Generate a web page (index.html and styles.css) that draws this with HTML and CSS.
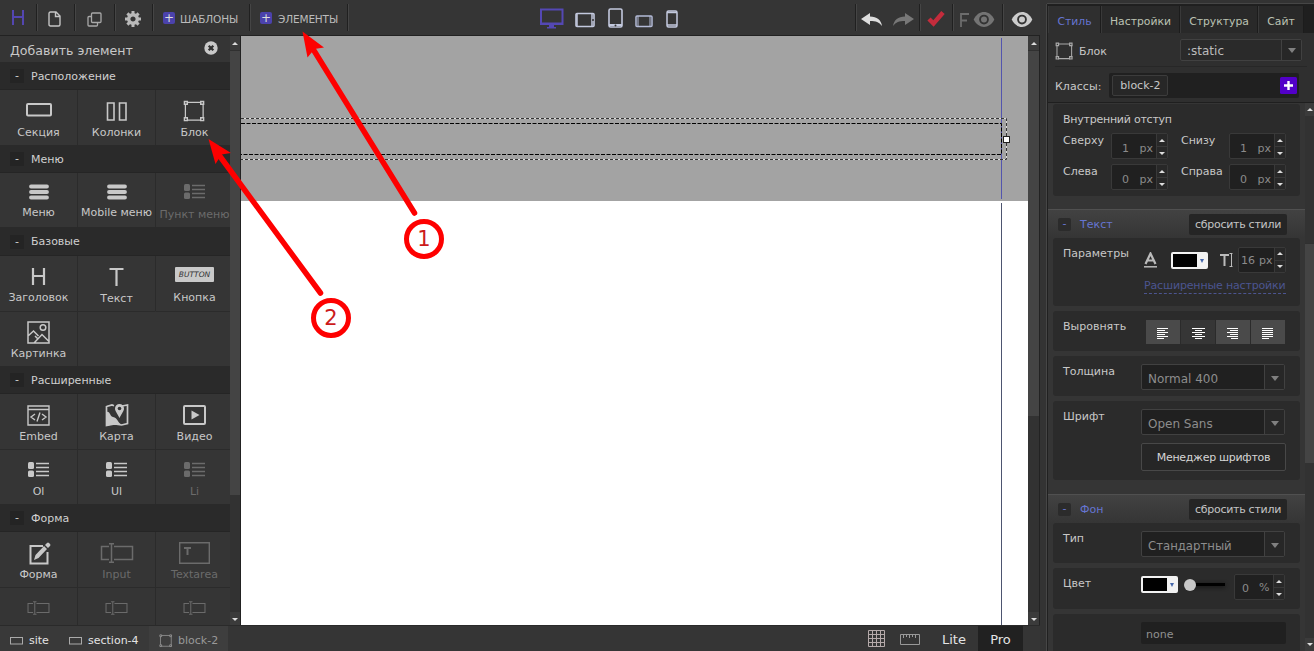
FILE: index.html
```html
<!DOCTYPE html>
<html lang="ru">
<head>
<meta charset="utf-8">
<title>Редактор</title>
<link rel="stylesheet" href="styles.css">
</head>
<body>
<svg class="defs" width="0" height="0">
  <symbol id="block" viewBox="0 0 24 24"><path d="M4 2.500h15M4 21h15M2.500 4v15M21 4v15" fill="none" stroke="currentColor" stroke-width="1.300"/><path d="M1.500 1.500h3v3h-3zM18.500 1.500h3v3h-3zM1.500 18.500h3v3h-3zM18.500 18.500h3v3h-3z" fill="#333" stroke="currentColor" stroke-width="1.500"/></symbol>
  <symbol id="burger" viewBox="0 0 20 18"><path d="M2 3.500h16M2 9h16M2 14.500h16" stroke="currentColor" stroke-width="3.800" stroke-linecap="round"/></symbol>
  <symbol id="list" viewBox="0 0 22 16"><rect width="6" height="7" rx="1.500" fill="currentColor"/><rect y="8.500" width="6" height="6.500" rx="1.500" fill="currentColor"/><path d="M8 1.500h13M8 5.500h13M8 9.500h13M8 13.500h13" stroke="currentColor" stroke-width="1.600"/></symbol>
  <symbol id="input" viewBox="0 0 34 20"><path d="M9 3.500H1.500v13H9M14 3.500h18.500v13H14M11.500 1v18M9 .7h5M9 19.300h5" fill="none" stroke="currentColor" stroke-width="1.500"/></symbol>
  <symbol id="eye" viewBox="0 0 22 16"><path d="M0 8C5-2.500 17-2.500 22 8 17 18.500 5 18.500 0 8z" fill="currentColor"/><circle cx="11" cy="8" r="4.200" fill="none" stroke="#333" stroke-width="2"/></symbol>
  <symbol id="undo" viewBox="0 0 22 14"><path d="M0 6 9 0v3.500c7 0 11 3.500 12 9.500-3-4-6-5-12-5V12z" fill="currentColor"/></symbol>
</svg>

<div class="app">
  <header class="topbar">
    <div class="tb logo"><svg width="14" height="17" viewBox="0 0 14 17"><path d="M2 1v15M12 1v15M2 8h10" stroke="#5346b0" stroke-width="2"/></svg></div>
    <div class="tb t38"><svg width="13" height="16" viewBox="0 0 13 16"><path d="M1 2.500Q1 1 2.500 1H8l4 4v8.500q0 1.500-1.500 1.500h-8Q1 15 1 13.500zM7.500 1v4.500H12" fill="none" stroke="#c4c4c4" stroke-width="1.400"/></svg></div>
    <div class="tb t40"><svg width="15" height="15" viewBox="0 0 15 15" fill="none" stroke="#a8a8a8" stroke-width="1.300"><rect x="4.500" y="1" width="9.500" height="9.500" rx="1"/><path d="M4.500 4.500H2q-1 0-1 1V13q0 1 1 1h7.500q1 0 1-1v-2.500"/></svg></div>
    <div class="tb t38"><svg width="16" height="16" viewBox="-8 -8 16 16"><circle r="4.300" fill="none" stroke="#b9b9b9" stroke-width="3.400"/><path d="M0-8v3M0 8V5M-8 0h3M8 0H5M-5.600-5.600l2 2M5.600 5.600l-2-2M-5.600 5.600l2-2M5.600-5.600l-2 2" stroke="#b9b9b9" stroke-width="3"/></svg></div>
    <div class="tb wide"><i class="plus">+</i>ШАБЛОНЫ</div>
    <div class="tb wide last"><i class="plus">+</i>ЭЛЕМЕНТЫ</div>
    <div class="devices">
      <svg width="26" height="22" viewBox="0 0 26 22"><path d="M2 1.500h21.500v14.500H2z" fill="none" stroke="#5448b4" stroke-width="2"/><path d="M1.500 14.500h22v2.500h-22zM10 17h5v2h2v1.500H8V19h2z" fill="#5448b4"/></svg>
      <svg class="d2" width="20" height="16" viewBox="0 0 20 16"><rect x="1" y="1.500" width="18" height="13" rx="1" fill="none" stroke="#c3c9de" stroke-width="1.600"/><path d="M2 1v13M17 1v13" stroke="#c3c9de" stroke-width="1.500"/><circle cx="18" cy="8" r="1" fill="#333"/></svg>
      <svg class="d3" width="15" height="20" viewBox="0 0 15 20"><rect x="1" y="1" width="13" height="18" rx="1.500" fill="none" stroke="#c3c9de" stroke-width="1.600"/><path d="M1 17h13" stroke="#c3c9de" stroke-width="2"/><circle cx="7.500" cy="17.500" r="1" fill="#333"/></svg>
      <svg class="d4" width="18" height="13" viewBox="0 0 18 13"><rect x="1" y="1" width="16" height="10.500" rx="1" fill="none" stroke="#b3bad6" stroke-width="1.500"/><path d="M3 1v10M15 1v10" stroke="#b3bad6"/></svg>
      <svg class="d5" width="12" height="18" viewBox="0 0 12 18"><rect x="1" y="1" width="10" height="16" rx="1.500" fill="none" stroke="#c3c9de" stroke-width="1.500"/><path d="M1 2.500h10M1 15h10" stroke="#c3c9de" stroke-width="1.500"/></svg>
    </div>
    <div class="tools">
      <div class="tool undo"><svg width="22" height="14" color="#ddd"><use href="#undo"/></svg><svg class="flip" width="22" height="14" color="#777"><use href="#undo"/></svg></div>
      <div class="tool check"><svg width="18" height="17" viewBox="0 0 18 17"><path d="m2 9 4.500 4.500L16 2.500" fill="none" stroke="#c42c3c" stroke-width="4.500"/></svg></div>
      <div class="tool fview"><svg width="9" height="14" viewBox="0 0 9 14"><path d="M1 14V1h8M1 7.500h6" fill="none" stroke="#6c6c6c" stroke-width="1.800"/></svg><svg width="22" height="15" color="#747474"><use href="#eye"/></svg></div>
      <div class="tool view"><svg width="22" height="15" color="#ccc"><use href="#eye"/></svg></div>
    </div>
  </header>

  <main class="work">
    <aside class="side">
      <div class="side-title"><span>Добавить элемент</span><svg width="14" height="14" viewBox="0 0 14 14"><circle cx="7" cy="7" r="6.700" fill="#c9c9c9"/><path d="m4.700 4.700 4.600 4.600m0-4.600L4.700 9.300" stroke="#303030" stroke-width="2.300"/></svg></div>
      <h3 class="group"><i>-</i><span>Расположение</span></h3>
      <div class="cells">
        <div class="cell"><b class="raise"><svg width="26" height="14"><rect x="1" y="1" width="24" height="11.500" rx="1" fill="none" stroke="currentColor" stroke-width="2"/></svg></b>Секция</div>
        <div class="cell"><b><svg width="22" height="19"><path d="M1.500 1h6.500v17H1.500zM13.500 1H20v17h-6.500z" fill="none" stroke="currentColor" stroke-width="1.600"/></svg></b>Колонки</div>
        <div class="cell"><b><svg width="23" height="23"><use href="#block"/></svg></b>Блок</div>
      </div>
      <h3 class="group"><i>-</i><span>Меню</span></h3>
      <div class="cells menu">
        <div class="cell"><b><svg width="20" height="18"><use href="#burger"/></svg></b>Меню</div>
        <div class="cell"><b><svg width="20" height="18"><use href="#burger"/></svg></b>Mobile меню</div>
        <div class="cell off low"><b><svg width="22" height="16"><use href="#list"/></svg></b>Пункт меню</div>
      </div>
      <h3 class="group tall"><i>-</i><span>Базовые</span></h3>
      <div class="cells">
        <div class="cell up"><b><svg width="15" height="17"><path d="M2 0v17M13 0v17M2 8h11" stroke="currentColor" stroke-width="2.200"/></svg></b>Заголовок</div>
        <div class="cell"><b><svg width="15" height="18"><path d="M.5 1h14M7.500 1v17" stroke="currentColor" stroke-width="2.200"/></svg></b>Текст</div>
        <div class="cell up"><b class="btn-icon"><em>BUTTON</em></b>Кнопка</div>
        <div class="cell top"><b><svg width="23" height="23" viewBox="0 0 23 23" fill="none" stroke="currentColor" stroke-width="1.500"><path d="M1 1h21v21H1zM1 15l5.500-5 5 5M7 22l8-8.500 7 7M11 18l-3-3"/><circle cx="16" cy="6.500" r="2.800"/></svg></b>Картинка</div>
        <div class="cell blank top"></div><div class="cell top"></div>
      </div>
      <h3 class="group"><i>-</i><span>Расширенные</span></h3>
      <div class="cells">
        <div class="cell"><b><svg width="23" height="21" viewBox="0 0 23 21" fill="none" stroke="currentColor" stroke-width="1.400"><path d="M1 1h21v19H1zM1 4.500h21M8 9l-4 3 4 3M15 9l4 3-4 3M13 7.500l-3 9"/></svg></b>Embed</div>
        <div class="cell"><b><svg width="24" height="23" viewBox="0 0 24 23"><path d="M1.500 2.500 7 1l2 .800M17 2l5.500-1v18.500L16.500 21l-7-1-8 1.500V2" fill="none" stroke="currentColor" stroke-width="1.700"/><path d="M1 8c5-1 3 4 7 5 5 1 4 5 9 8l-8-1-8 2z" fill="currentColor"/><path d="M14.500 14C12 9 10 7 10 4.500a4.500 4.500 0 0 1 9 0C19 7 17 9 14.500 14z" fill="currentColor"/><circle cx="14.500" cy="4.500" r="1.800" fill="#333"/></svg></b>Карта</div>
        <div class="cell"><b><svg width="23" height="20"><rect x="1" y="1" width="21" height="18" rx="1" fill="none" stroke="currentColor" stroke-width="2"/><path d="m8.500 5.500 8 4.500-8 4.500z" fill="currentColor"/></svg></b>Видео</div>
        <div class="cell top"><b><svg width="22" height="16"><use href="#list"/></svg></b>Ol</div>
        <div class="cell top"><b><svg width="22" height="16"><use href="#list"/></svg></b>Ul</div>
        <div class="cell top off"><b><svg width="22" height="16"><use href="#list"/></svg></b>Li</div>
      </div>
      <h3 class="group"><i>-</i><span>Форма</span></h3>
      <div class="cells">
        <div class="cell"><b><svg class="pencil" width="22" height="23" viewBox="0 0 22 23"><path d="M14 4H1.500v17.500h17V10" fill="none" stroke="currentColor" stroke-width="2"/><path d="m5 18 1.500-5L15 4l3 3-8.500 9zM16 3l2-2q1-1 2 0l1 1q1 1 0 2l-2 2z" fill="currentColor"/></svg></b>Форма</div>
        <div class="cell off"><b><svg width="34" height="20"><use href="#input"/></svg></b>Input</div>
        <div class="cell off"><b><svg width="31" height="22" viewBox="0 0 31 22"><path d="M.7.700h29.600v20.600H.7z" fill="none" stroke="currentColor" stroke-width="1.400"/><path d="M5 6h7M8.500 6v7" stroke="currentColor" stroke-width="2"/></svg></b>Textarea</div>
        <div class="cell top off"><b><svg width="23" height="14"><use href="#input"/></svg></b></div>
        <div class="cell top off"><b><svg width="23" height="14"><use href="#input"/></svg></b></div>
        <div class="cell top off"><b><svg width="23" height="14"><use href="#input"/></svg></b></div>
      </div>
    </aside>
    <div class="scroll side-scroll"><u class="up-arrow"></u><div class="thumb"></div><u class="down-arrow"></u></div>
    <section class="canvas">
      <div class="grey"></div>
      <svg class="guides" width="787" height="590" viewBox="241 36 787 590" fill="none">
        <path d="M1001.500 38v161" stroke="#5355ae"/><path d="M1001.500 203v423" stroke="#4d5570"/>
        <path d="M241 118.500h765.500v41H241" stroke="#ddd"/><path d="M241 118.500h765.500v41H241" stroke="#333" stroke-dasharray="3 2"/>
        <path d="M241 123.500h760.500v31H241" stroke="#000" stroke-dasharray="4 1.500"/>
        <rect x="1003.500" y="136.500" width="6" height="6" fill="#fff" stroke="#222"/>
      </svg>
    </section>
    <div class="scroll main-scroll"><u class="up-arrow"></u><div class="thumb"></div><u class="down-arrow"></u></div>
  </main>

  <footer class="bottom">
    <div class="crumb c1"><svg width="13" height="8"><rect x=".5" y=".5" width="12" height="6.500" fill="none" stroke="#aaa"/></svg>site</div>
    <div class="crumb c2"><svg width="13" height="8"><rect x=".5" y=".5" width="12" height="6.500" fill="none" stroke="#aaa"/></svg>section-4</div>
    <div class="crumb c3"><svg width="14" height="14" color="#999"><use href="#block"/></svg>block-2</div>
    <div class="modes">
      <svg width="17" height="17"><path d="M.5.500h16v16H.5zM4.500 0v17M8.500 0v17M12.500 0v17M0 4.500h17M0 8.500h17M0 12.500h17" fill="none" stroke="#b5aaaa"/></svg>
      <svg class="ruler" width="20" height="11"><path d="M.5.500h19v10H.5zM3.500 0v4M6.500 0v3M9.500 0v4M12.500 0v3M15.500 0v4" fill="none" stroke="#999"/></svg>
      <span class="lite">Lite</span><span class="pro">Pro</span>
    </div>
  </footer>
</div>

<div class="panel">
  <nav class="tabs"><a class="on w1">Стиль</a><a class="w2">Настройки</a><a class="w3">Структура</a><a class="w4">Сайт</a></nav>
  <div class="state"><svg width="19" height="19" color="#aaa"><use href="#block"/></svg><span>Блок</span><div class="select sm"><span>:static</span><u></u></div></div>
  <div class="classes"><span>Классы:</span><div class="class-box"><span class="chip">block-2</span><svg width="17" height="17"><rect width="17" height="17" rx="1.500" fill="#5200c8"/><path d="M4 8.500h9M8.500 4v9" stroke="#fff" stroke-width="2.400"/></svg></div></div>
  <div class="panel-body">
    <div class="props">
      <div class="card pads">
        <div class="pad-title">Внутренний отступ</div>
        <div class="pad-grid">
          <label>Сверху</label><div class="num"><span>1</span><span>px</span><s><u class="au"></u><u class="ad"></u></s></div>
          <label>Снизу</label><div class="num"><span>1</span><span>px</span><s><u class="au"></u><u class="ad"></u></s></div>
          <label>Слева</label><div class="num"><span>0</span><span>px</span><s><u class="au"></u><u class="ad"></u></s></div>
          <label>Справа</label><div class="num"><span>0</span><span>px</span><s><u class="au"></u><u class="ad"></u></s></div>
        </div>
      </div>
      <div class="sect"><i>-</i><span>Текст</span><button>сбросить стили</button></div>
      <div class="card params"><label>Параметры</label>
        <div class="ctl">
          <div class="font-row">
            <svg width="13" height="16"><path d="M1.500 12 6.500 1.500l5 10.500M3 8.500h7" fill="none" stroke="#bbb" stroke-width="2.200"/><path d="M0 14.800h13" stroke="#bbb" stroke-width="1.500"/></svg>
            <div class="color"><u></u></div>
            <svg class="tsize" width="14" height="14"><path d="M0 2h9M4.500 2v11" stroke="#bbb" stroke-width="2"/><path d="M9.500.500h3M9.500 13.500h3M11.500 1v13" stroke="#bbb" fill="none"/></svg>
            <div class="num size"><span>16</span><span>px</span><s><u class="au"></u><u class="ad"></u></s></div>
          </div>
          <a class="more">Расширенные настройки</a>
        </div>
      </div>
      <div class="card align"><label>Выровнять</label>
        <div class="aligns">
          <span><svg width="12" height="12"><path d="M0 .500h11M0 2.500h8M0 4.500h11M0 6.500h8M0 8.500h11M0 10.500h7" stroke="#fff"/></svg></span>
          <span class="dark"><svg width="13" height="12"><path d="M0 .500h13M3 2.500h7M0 4.500h13M3 6.500h7M0 8.500h13M3 10.500h7" stroke="#fff"/></svg></span>
          <span><svg width="12" height="12"><path d="M0 .500h11M3 2.500h8M0 4.500h11M3 6.500h8M0 8.500h11M4 10.500h7" stroke="#fff"/></svg></span>
          <span><svg width="12" height="12"><path d="M0 .500h11M0 2.500h11M0 4.500h11M0 6.500h11M0 8.500h11M0 10.500h7" stroke="#fff"/></svg></span>
        </div>
      </div>
      <div class="card one weight"><label>Толщина</label><div class="select"><span>Normal 400</span><u></u></div></div>
      <div class="card font"><label>Шрифт</label><div class="ctl"><div class="select"><span>Open Sans</span><u></u></div><button class="manager">Менеджер шрифтов</button></div></div>
      <div class="sect second"><i>-</i><span>Фон</span><button>сбросить стили</button></div>
      <div class="card one"><label>Тип</label><div class="select type"><span>Стандартный</span><u></u></div></div>
      <div class="card fill"><label>Цвет</label><div class="color"><u></u></div><div class="slider"></div><div class="num pct"><span>0</span><span>%</span><s><u class="au"></u><u class="ad"></u></s></div></div>
      <div class="card none"><div class="field">none</div></div>
    </div>
    <div class="scroll panel-scroll"><u class="up-arrow"></u><div class="thumb"></div><u class="down-arrow"></u></div>
  </div>
</div>

<svg class="notes" width="1314" height="651">
  <g stroke="#fe0000" stroke-width="5.500" stroke-linecap="round" fill="none"><path d="M313 49 414.500 213M219 155l101.500 138"/></g>
  <path d="m302.500 31.500 21.500 16-9.500 1.500-7 8.500zM208.500 139l22.500 14-9.500 1.500-6 9.500z" fill="#fe0000"/>
  <g fill="#fff" stroke="#fe0000" stroke-width="5"><circle cx="424" cy="239" r="17.500"/><circle cx="331" cy="318" r="17.500"/></g>
  <text x="424" y="246">1</text><text x="331" y="325">2</text>
</svg>
</body>
</html>
```
FILE: styles.css
```css
* { box-sizing: border-box; }
body { margin: 0; width: 1314px; height: 651px; overflow: hidden; display: flex; background: #333; color: #c8c8c8; font: 11px/16px "DejaVu Sans", sans-serif; position: relative; }
svg { display: block; flex: none; }
i, em, s, u { font-style: normal; text-decoration: none; }
.defs { position: absolute; }
.app { width: 1040px; height: 651px; display: flex; flex-direction: column; }

.topbar { height: 36px; display: flex; padding-top: 4px; background: #353535; border-bottom: 1px solid #222; }
.tb { height: 27px; display: flex; align-items: center; justify-content: center; border-right: 1px solid #202020; box-shadow: 1px 0 #454545; }
.logo { width: 37px; align-items: flex-start; padding-top: 5px; }
.t38 { width: 38px; padding-top: 2px; padding-right: 2px; }
.t40 { width: 40px; padding-top: 3px; padding-right: 1px; }
.wide { width: 97px; justify-content: space-between; padding: 3px 11px 0 10px; font-size: 10.500px; color: #bbb; letter-spacing: -.15px; }
.last { width: 98px; padding-right: 9px; }
.plus { width: 12px; height: 12px; margin-top: -2px; border-radius: 2px; background: #4b42ac; color: #ddd; font-size: 12px; line-height: 12px; text-align: center; letter-spacing: 0; }
.devices { margin-left: 191px; display: flex; align-items: flex-end; gap: 11px; height: 24px; }
.devices svg:first-child { margin-bottom: -2px; }
.d2 { margin-left: -1px; }
.d3 { margin-left: 2px; }
.d4 { margin-left: 1px; }
.d5 { margin-left: 2px; }
.tools { margin-left: auto; margin-right: 6px; display: flex; height: 27px; }
.tool { border-left: 1px solid #202020; box-shadow: inset 1px 0 #454545; display: flex; align-items: center; justify-content: center; padding-top: 4px; }
.undo { width: 64px; gap: 9px; }
.flip { transform: scaleX(-1); }
.check { width: 33px; padding-top: 2px; }
.fview { width: 50px; gap: 4px; }
.view { width: 33px; padding-left: 5px; margin-right: -1px; }

.work { height: 590px; display: flex; }
.side { width: 230px; overflow: hidden; background: #353535; }
.side-title { height: 26px; padding: 3px 12px 0 10px; display: flex; justify-content: space-between; align-items: center; font-size: 12.600px; }
.side-title svg { margin-top: -5px; }
.group { height: 28px; margin: 0; padding-left: 10px; display: flex; align-items: center; background: #2a2a2a; border-bottom: 1px solid #252525; font-size: 11px; font-weight: normal; color: #d0d0d0; }
.group.tall { height: 29px; }
.group span { padding-top: 2px; }
.group i { width: 14px; height: 14px; margin: 1px 7px 0 0; background: #242424; line-height: 14px; text-align: center; }
.cells { display: grid; grid-template-columns: repeat(3, 78px); grid-auto-rows: 55px; }
.cells.menu { grid-auto-rows: 54px; }
.cell { border-right: 1px solid #2b2b2b; padding-top: 7px; text-align: center; white-space: nowrap; }
.cell.top { border-top: 1px solid #2b2b2b; padding-top: 6px; }
.cell.blank { border-right-color: transparent; }
.cell.off { color: #6b6b6b; }
.cell b { height: 28px; display: flex; align-items: center; justify-content: center; }
.cell .raise { padding-bottom: 3px; }
.pencil { margin-left: 3px; }
.menu .cell { padding-top: 6px; }
.menu .cell b { height: 26px; }
.menu .low b { height: 28px; padding-bottom: 3px; }
.cell.up b { height: 27px; }
.btn-icon em { width: 39px; height: 15px; margin-top: -4px; background: #c9c9c9; color: #333; border-radius: 1px; font: italic 7.500px/15px "DejaVu Sans", sans-serif; }

.scroll { display: flex; flex-direction: column; background: #323232; }
.scroll u { height: 14px; flex: none; background: #3b3b3b; display: flex; align-items: center; justify-content: center; }
.up-arrow::after, .down-arrow::after { content: ""; border: 3px solid transparent; }
.up-arrow::after { border-top: 0; border-bottom-color: #ddd; }
.down-arrow::after { border-bottom: 0; border-top-color: #ddd; }
.thumb { background: #444; border-top: 1px solid #303030; }
.down-arrow { margin-top: auto; }
.side-scroll { width: 11px; border-right: 1px solid #222; }
.side-scroll .thumb { height: 445px; }
.canvas { width: 787px; background: #fff; position: relative; }
.grey { height: 165px; background: #a3a3a3; }
.guides { position: absolute; inset: 0; }
.main-scroll { width: 12px; border-right: 1px solid #222; }
.main-scroll .thumb { height: 366px; }

.bottom { height: 26px; margin-top: -1px; position: relative; display: flex; background: #353535; border-top: 1px solid #2a2a2a; color: #e4e4e4; }
.crumb { display: flex; align-items: center; gap: 6px; padding: 5px 0 0 10px; background: #393939; }
.c1 { width: 59px; } .c2 { width: 90px; } .c3 { width: 79px; color: #999; background: #3e3e3e; gap: 5px; }
.modes { margin-left: auto; display: flex; align-items: center; font-size: 13px; }
.ruler { margin: 2px 22px 0 15px; }
.lite { width: 38px; padding-top: 2px; }
.pro { width: 45px; height: 25px; padding-top: 6px; margin-right: 17px; background: #212121; text-align: center; margin-left: -2px; }

.panel { width: 267px; height: 647px; margin: 4px 0 0 7px; border-left: 1px solid #202020; border-top: 1px solid #202020; background: #2f2f2f; box-shadow: 0 -1px #464646, -1px 0 #464646; display: flex; flex-direction: column; }
.tabs { height: 28px; background: #1f1f1f; display: flex; padding-top: 1px; font-size: 10.800px; }
.tabs a { height: 27px; padding-top: 8px; text-align: center; color: #bcc3b4; background: #292929; border-right: 1px solid #1c1c1c; border-left: 1px solid #393939; }
.tabs .on { background: #2f2f2f; color: #6675d2; }
.w1 { width: 53px; } .w2 { width: 79px; } .w3 { width: 78px; } .w4 { width: 46px; }
.state { height: 34px; margin: 0 7px; padding: 2px 5px 0 0; display: flex; align-items: center; border-bottom: 1px solid #272727; }
.state > span { margin: 3px 0 0 5px; }
.state > svg { margin-top: 1px; }
.select { width: 144px; height: 26px; background: #202020; border: 1px solid #414141; border-radius: 2px; display: flex; font-size: 12px; color: #8d8d8d; }
.select span { flex: 1; padding: 5px 0 0 6px; }
.select u { width: 20px; border-left: 1px solid #414141; background: #272727; display: flex; align-items: center; justify-content: center; }
.select u::after { content: ""; margin-top: 3px; border: 4px solid transparent; border-top: 5px solid #808080; border-bottom: 0; }
.select.sm { width: 122px; height: 22px; margin: -1px 0 0 auto; background: #2a2a2a; color: #bbb; }
.select.sm span { padding-top: 3px; padding-left: 6px; }
.select.sm u::after { margin-top: 1px; }
.select.type { font-size: 11.700px; }
.classes { height: 36px; flex: none; display: flex; align-items: center; padding: 2px 0 0 7px; border-bottom: 1px solid #1f1f1f; }
.classes > span { padding-top: 2px; letter-spacing: .05px; }
.class-box { width: 190px; height: 25px; margin: -1px 0 0 8px; padding: 0 2px 0 3px; background: #202020; display: flex; align-items: center; justify-content: space-between; border-radius: 2px; }
.chip { height: 21px; width: 56px; border: 1px solid #3c3c3c; background: #272727; border-radius: 2px; text-align: center; line-height: 20px; }

.panel-body { flex: 1; min-height: 0; display: flex; overflow: hidden; background: #353535; }
.props { width: 257px; flex: none; height: 548px; overflow: hidden; }
.card { width: 247px; margin: 0 0 5px 5px; padding-left: 10px; background: #2b2b2b; border-radius: 3px; display: flex; }
.card label { width: 78px; flex: none; }
.card > label { padding-top: 8px; }
.pads { height: 92px; margin: 1px 0 13px 5px; padding-top: 8px; display: block; }
.pad-title { letter-spacing: -.24px; }
.pad-grid { display: grid; grid-template-columns: 48px 70px 48px 60px; grid-auto-rows: 31px; margin-top: 5px; }
.pad-grid label { width: auto; }
.num { width: 57px; height: 26px; border: 1px solid #393939; border-radius: 2px; background: #202020; display: flex; color: #8b8b8b; }
.num span { width: 28px; padding: 7px 0 0 10px; }
.num span + span { width: 17px; padding-left: 0; }
.num s { width: 11px; background: #282828; border-left: 1px solid #393939; display: flex; flex-direction: column; margin-left: auto; }
.num s u { height: 12px; padding-right: 1px; display: flex; align-items: center; justify-content: center; }
.num s u + u { border-top: 1px solid #393939; padding-top: 1px; }
.au::after, .ad::after { content: ""; border: 3px solid transparent; }
.au::after { border-top: 0; border-bottom: 3px solid #ddd; }
.ad::after { border-bottom: 0; border-top: 3px solid #ddd; }
.sect { height: 29px; border-top: 1px solid #505050; background: linear-gradient(#424242, #353535); display: flex; align-items: center; padding-left: 10px; color: #6675d2; }
.sect span { padding-top: 2px; }
.sect i { width: 13px; height: 13px; background: #2b2b2b; border-radius: 2px; line-height: 12px; text-align: center; margin-right: 9px; }
.sect button { width: 98px; height: 21px; margin: 0 18px 0 auto; padding: 2px 0 0; border: 0; border-radius: 2px; background: #252525; color: #c4c4c4; font: inherit; letter-spacing: -.27px; }
.second { margin-top: 14px; }
.params { height: 68px; }
.params .ctl { padding: 9px 0 0 3px; }
.font-row { display: flex; align-items: center; height: 25px; width: 142px; }
.color { width: 37px; height: 17px; background: #f2f2f2; border-radius: 2px; padding: 2px; display: flex; align-items: center; }
.color u { width: 24px; height: 13px; background: #000; }
.color::after { content: ""; margin-left: 3px; border: 2.500px solid transparent; border-top: 4px solid #4466aa; border-bottom: 0; }
.params .color { margin: 2px 12px 0 14px; }
.size { width: 48px; margin-left: auto; }
.size span { width: 20px; padding: 5px 0 0 2px; }
.size span + span { padding-left: 0; width: 15px; }
.tsize { margin-top: 1px; }
.more { display: inline-block; width: 142px; margin-top: 7px; line-height: 14px; color: #4c5590; border-bottom: 1px dashed #4c5590; white-space: nowrap; letter-spacing: -.15px; }
.align { height: 40px; }
.aligns { display: flex; gap: 1px; padding: 9px 0 0 5px; }
.aligns span { width: 34px; height: 24px; padding-top: 3px; background: #4a4a4a; display: flex; align-items: center; justify-content: center; }
.aligns .dark { background: #363636; }
.one { height: 40px; padding-top: 8px; }
.one > label { padding-top: 0; }
.font { height: 79px; margin-bottom: 0; }
.font .ctl { padding-top: 8px; }
.select span { padding-top: 6px; }
.manager { width: 145px; height: 28px; margin: 8px 0 0; padding: 2px 0 0; display: block; border: 1px solid #484848; background: #262626; border-radius: 2px; color: #d5d5d5; font: inherit; letter-spacing: -.3px; }
.fill { height: 41px; align-items: flex-start; }
.fill .color { margin-top: 8px; }
.slider { width: 37px; height: 3px; background: #000; margin: 15px 0 0 10px; box-shadow: 0 1px 4px #111; display: flex; align-items: center; }
.slider::before { content: ""; width: 12px; height: 12px; flex: none; margin-left: -4px; border-radius: 50%; background: #c8c8c8; }
.pct { width: 51px; margin: 6px 0 0 9px; }
.pct span { width: 24px; padding: 6px 0 0 7px; }
.pct span + span { width: 14px; padding-top: 5px; }
.none { height: 60px; padding: 8px 0 0 88px; }
.field { width: 145px; height: 22px; background: #202020; border-radius: 2px; padding: 5px; color: #909090; }
.panel-scroll { width: 9px; height: 548px; flex: none; }
.panel-scroll u { height: 13px; }
.panel-scroll .thumb { height: 220px; margin-top: 127px; }

.notes { position: absolute; inset: 0; }
.notes text { fill: #cc1a1a; font: 21px "DejaVu Sans", sans-serif; text-anchor: middle; }
```
